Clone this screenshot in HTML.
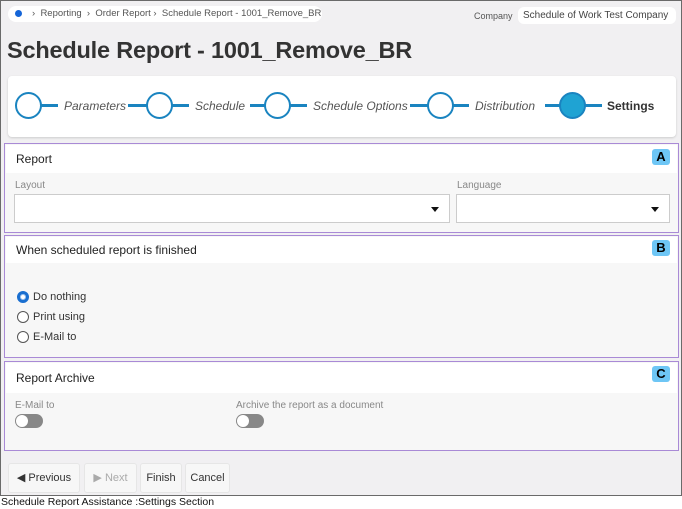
<!DOCTYPE html><html><head><style>
*{margin:0;padding:0;box-sizing:border-box}
body{width:682px;height:509px;background:#fff;font-family:"Liberation Sans",sans-serif;position:relative;overflow:hidden;color:#333}
.a{position:absolute}
.frame{left:0;top:0;width:682px;height:496px;background:#f1f0f2;border:1px solid #6a6a6a}
.sec{border:1.5px solid #a98ad6;background:#f7f7f7}
.hd{position:absolute;left:1px;right:1px;top:1px;background:#fff;font-size:12px;color:#222;padding-left:10px}
.badge{position:absolute;width:18px;height:16px;background:#6ec6f5;border-radius:3px;font-weight:bold;font-size:13px;text-align:center;line-height:16px;color:#000}
.lbl{font-size:10px;color:#888}
.sel{background:#fff;border:1px solid #ccc}
.sel:after{content:"";position:absolute;right:10px;top:12px;border:4px solid transparent;border-top:5px solid #111}
.circ{width:27px;height:27px;border:2px solid #1a84c0;border-radius:50%;background:#fff;top:92px}
.ln{height:3px;background:#1a84c0;top:104px}
.st{font-size:12px;font-style:italic;color:#555;top:99px;white-space:nowrap}
.rad{width:12px;height:12px;border:1px solid #555;border-radius:50%;background:#fff}
.rt{font-size:11px;color:#333}
.tog{width:28px;height:14px;border-radius:7px;background:#888}
.tog:before{content:"";position:absolute;left:1px;top:1px;width:12px;height:12px;border-radius:50%;background:#fff}
.btn{top:463px;height:30px;background:#f7f7f7;border:1px solid #e6e6e6;border-radius:3px;font-size:11px;color:#333;line-height:28px;text-align:center}
</style></head><body>
<div class="a frame"></div>
<div class="a" style="left:8px;top:6px;width:314px;height:16px;background:#fff;border-radius:8px"></div>
<div class="a" style="left:15px;top:10px;width:7px;height:7px;border-radius:50%;background:#1565d8"></div>
<div class="a" style="left:32px;top:8px;font-size:9.5px;color:#555;white-space:nowrap">›&nbsp; Reporting &nbsp;›&nbsp; Order Report › &nbsp;Schedule Report - 1001_Remove_BR</div>
<div class="a" style="left:474px;top:11px;font-size:9px;color:#555">Company</div>
<div class="a" style="left:518px;top:7px;width:158px;height:17px;background:#fff;border-radius:6px;font-size:10px;color:#444;padding:3px 0 0 5px;white-space:nowrap;overflow:hidden">Schedule of Work Test Company</div>
<div class="a" style="left:7px;top:37px;font-size:23.5px;font-weight:bold;color:#333;letter-spacing:-0.2px;white-space:nowrap">Schedule Report - 1001_Remove_BR</div>
<div class="a" style="left:8px;top:76px;width:668px;height:61px;background:#fff;border-radius:4px;box-shadow:0 1px 2px #ccc"></div>
<div class="a ln" style="left:40px;width:18px"></div>
<div class="a ln" style="left:128px;width:19px"></div><div class="a ln" style="left:171px;width:18px"></div>
<div class="a ln" style="left:250px;width:15px"></div><div class="a ln" style="left:289px;width:18px"></div>
<div class="a ln" style="left:410px;width:18px"></div><div class="a ln" style="left:452px;width:17px"></div>
<div class="a ln" style="left:545px;width:16px"></div><div class="a ln" style="left:584px;width:18px"></div>
<div class="a circ" style="left:15px"></div>
<div class="a circ" style="left:146px"></div>
<div class="a circ" style="left:264px"></div>
<div class="a circ" style="left:427px"></div>
<div class="a circ" style="left:559px;background:#1fa3d3;border-color:#1a84c0"></div>
<div class="a st" style="left:64px">Parameters</div>
<div class="a st" style="left:195px">Schedule</div>
<div class="a st" style="left:313px">Schedule Options</div>
<div class="a st" style="left:475px">Distribution</div>
<div class="a st" style="left:607px;font-style:normal;color:#333;font-weight:bold">Settings</div>

<div class="a sec" style="left:4px;top:143px;width:675px;height:90px"><div class="hd" style="height:28px;line-height:28px">Report</div></div>
<div class="a badge" style="left:652px;top:149px">A</div>
<div class="a lbl" style="left:15px;top:180px">Layout</div>
<div class="a lbl" style="left:457px;top:180px">Language</div>
<div class="a sel" style="left:14px;top:194px;width:436px;height:29px"></div>
<div class="a sel" style="left:456px;top:194px;width:214px;height:29px"></div>

<div class="a sec" style="left:4px;top:235px;width:675px;height:123px"><div class="hd" style="height:26px;line-height:26px">When scheduled report is finished</div></div>
<div class="a badge" style="left:652px;top:240px">B</div>
<div class="a rad" style="left:17px;top:291px;border:3px solid #1a6fd0;box-shadow:0 0 0 1px #9bc3f0 inset"></div>
<div class="a rt" style="left:33px;top:291px">Do nothing</div>
<div class="a rad" style="left:17px;top:311px"></div><div class="a rt" style="left:33px;top:311px">Print using</div>
<div class="a rad" style="left:17px;top:331px"></div><div class="a rt" style="left:33px;top:331px">E-Mail to</div>

<div class="a sec" style="left:4px;top:361px;width:675px;height:90px"><div class="hd" style="height:30px;line-height:30px">Report Archive</div></div>
<div class="a badge" style="left:652px;top:366px">C</div>
<div class="a lbl" style="left:15px;top:400px">E-Mail to</div>
<div class="a lbl" style="left:236px;top:400px">Archive the report as a document</div>
<div class="a tog" style="left:15px;top:414px"></div>
<div class="a tog" style="left:236px;top:414px"></div>

<div class="a btn" style="left:8px;width:72px">◀ Previous</div>
<div class="a btn" style="left:84px;width:53px;color:#aaa">▶ Next</div>
<div class="a btn" style="left:140px;width:42px">Finish</div>
<div class="a btn" style="left:185px;width:45px">Cancel</div>
<div class="a" style="left:1px;top:496px;font-size:10.5px;color:#111">Schedule Report Assistance :Settings Section</div>
</body></html>
